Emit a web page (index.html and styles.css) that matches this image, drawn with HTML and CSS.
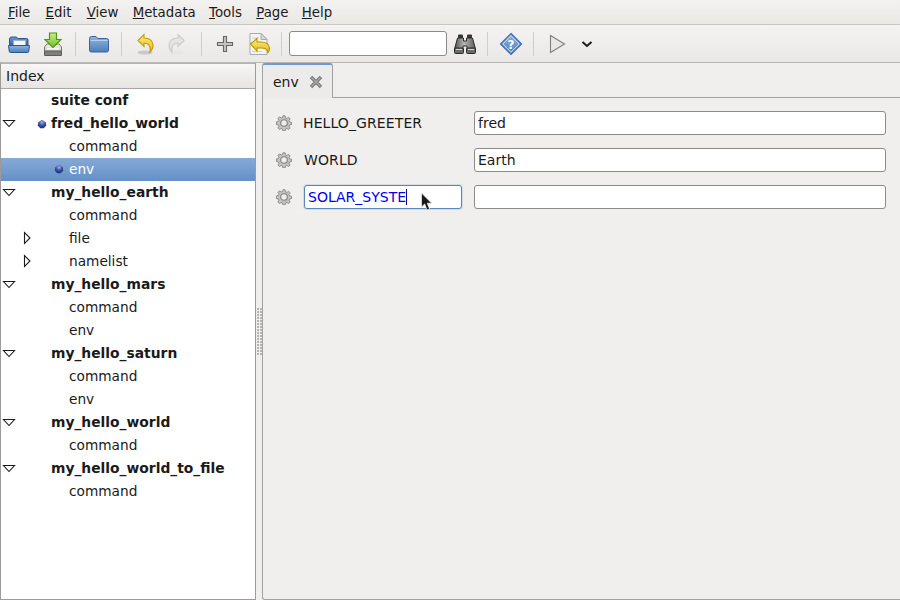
FILE: index.html
```html
<!DOCTYPE html>
<html lang="en">
<head>
<meta charset="utf-8">
<title>Index</title>
<link rel="stylesheet" href="styles.css">
</head>
<body>
<svg class="defs" width="0" height="0" aria-hidden="true">
  <defs>
    <linearGradient id="g-blue" x1="0" y1="0" x2="0" y2="1"><stop offset="0" stop-color="#8fb4de"/><stop offset="1" stop-color="#4d7fba"/></linearGradient>
    <linearGradient id="g-blue2" x1="0" y1="0" x2="0" y2="1"><stop offset="0" stop-color="#6c9bd2"/><stop offset="1" stop-color="#2f6099"/></linearGradient>
    <linearGradient id="g-gold" x1="0" y1="0" x2="0" y2="1"><stop offset="0" stop-color="#fbeb8a"/><stop offset="1" stop-color="#e8bd12"/></linearGradient>
    <linearGradient id="g-green" x1="0" y1="0" x2="0" y2="1"><stop offset="0" stop-color="#c4ee8c"/><stop offset="1" stop-color="#72c12a"/></linearGradient>
    <linearGradient id="g-metal" x1="0" y1="0" x2="0" y2="1"><stop offset="0" stop-color="#f2f2f0"/><stop offset="1" stop-color="#b9b9b6"/></linearGradient>
    <linearGradient id="g-bino" x1="0" y1="0" x2="1" y2="0"><stop offset="0" stop-color="#4e504d"/><stop offset=".45" stop-color="#b5b7b3"/><stop offset="1" stop-color="#5a5c59"/></linearGradient>
    <radialGradient id="g-dot" cx=".5" cy=".3" r=".7"><stop offset="0" stop-color="#a9b8e6"/><stop offset=".5" stop-color="#3a52a8"/><stop offset="1" stop-color="#1f3278"/></radialGradient>
    <symbol id="arrow-open" viewBox="0 0 14 10"><path d="M1.500 1.500h11L7 7.500z" fill="#fff" stroke="#1c1c1c" stroke-width="1.100"/></symbol>
    <symbol id="arrow-closed" viewBox="0 0 10 14"><path d="M2.500 1.500v11L8 7z" fill="#fff" stroke="#1c1c1c" stroke-width="1.100"/></symbol>
    <symbol id="dot" viewBox="0 0 10 10"><path d="M5 .8 8.800 3.200 9.200 6.500 6.800 9.300H3.200L.8 6.500 1.200 3.200z" fill="url(#g-dot)"/></symbol>
    <symbol id="gear" viewBox="0 0 16 16"><path d="M6.900.8h2.200l.4 2 1.300.6 1.800-1.100 1.500 1.500-1.100 1.800.6 1.300 2 .4v2.200l-2 .4-.6 1.300 1.100 1.800-1.500 1.500-1.800-1.100-1.300.6-.4 2H6.900l-.4-2-1.300-.6-1.800 1.100-1.500-1.500 1.100-1.800-.6-1.300-2-.4V6.900l2-.4.6-1.300-1.100-1.800 1.500-1.500 1.800 1.100 1.300-.6z" fill="#c4c3c0" stroke="#858583" stroke-width=".9"/><circle cx="8" cy="8" r="3.300" fill="#efeeec" stroke="#7e7e7c" stroke-width="1.100"/></symbol>
  </defs>
</svg>

<nav class="menubar">
  <span class="menu menu-wide"><u>F</u>ile</span>
  <span class="menu menu-wide"><u>E</u>dit</span>
  <span class="menu"><u>V</u>iew</span>
  <span class="menu menu-narrow"><u>M</u>etadata</span>
  <span class="menu"><u>T</u>ools</span>
  <span class="menu menu-narrow"><u>P</u>age</span>
  <span class="menu"><u>H</u>elp</span>
</nav>

<div class="toolbar">
  <span class="tool">
    <svg width="24" height="24" viewBox="0 0 24 24"><path d="M2.500 7q0-2 2-2h5l1.500 1.500h8.500q1.500 0 1.500 1.500v6H2.500z" fill="url(#g-blue2)" stroke="#2a5488"/><rect x="6.500" y="8.500" width="12" height="5" fill="#f6f6f4" stroke="#9fb0c8" stroke-width=".8"/><path d="M1.500 13.500h21l-.8 6q-.1 1-1.200 1H3.500q-1.100 0-1.200-1z" fill="url(#g-blue)" stroke="#2a5488"/></svg>
  </span>
  <span class="tool">
    <svg width="24" height="26" viewBox="0 0 24 26"><path d="M3.500 16 6 13h12l2.500 3v8H3.500z" fill="url(#g-metal)" stroke="#777775"/><rect x="3.500" y="20" width="17" height="4.500" rx=".5" fill="#7e7e7c" stroke="#5c5c5a"/><rect x="6" y="17" width="12" height="1.500" fill="#fafaf8"/><path d="M8.500 2h7v6.500h4.500L12 16.500 4 8.500h4.500z" fill="url(#g-green)" stroke="#4e9a06" stroke-width="1.200"/></svg>
  </span>
  <span class="sep"></span>
  <span class="tool">
    <svg width="24" height="24" viewBox="0 0 24 24"><path d="M2.500 6.500q0-2 2-2h4.500l2 2h8.500q2 0 2 2v10q0 1.500-2 1.500h-15q-2 0-2-1.500z" fill="url(#g-blue)" stroke="#3a659c"/><path d="M3.500 8h17v1h-17z" fill="#b9d2ec"/></svg>
  </span>
  <span class="sep"></span>
  <span class="tool tool-tight">
    <svg width="24" height="26" viewBox="0 0 24 26"><ellipse cx="12" cy="21.500" rx="7.500" ry="2" fill="#c9c9c6"/><path d="M5 9.500 11 3.500v3.500q8 0 9 6.500.4 4-3 7.500 1-4-.8-6.500-1.500-2.500-5.200-2.500v3.500z" fill="url(#g-gold)" stroke="#c49c00" stroke-width="1.100"/></svg>
  </span>
  <span class="tool tool-wide">
    <svg width="24" height="26" viewBox="0 0 24 26"><ellipse cx="12" cy="21.500" rx="7.500" ry="2" fill="#e6e6e3"/><path d="M19 9.500 13 3.500v3.500q-8 0-9 6.500-.4 4 3 7.500-1-4 .8-6.500 1.500-2.500 5.200-2.500v3.500z" fill="#e4e4e1" stroke="#cbcbc8" stroke-width="1.100"/></svg>
  </span>
  <span class="sep"></span>
  <span class="tool">
    <svg width="24" height="24" viewBox="0 0 24 24"><path d="M10.500 4.500h3v6h6v3h-6v6h-3v-6h-6v-3h6z" fill="#c4c4c1" stroke="#666664" stroke-width="1.100"/></svg>
  </span>
  <span class="tool">
    <svg width="24" height="26" viewBox="0 0 24 26"><path d="M3 2.500h11l6 6v15H3z" fill="#f4f4f1" stroke="#a9a9a6"/><path d="M14 2.500v6h6z" fill="#d9d9d6" stroke="#a9a9a6"/><path d="M5 7h7M5 20.500h10" stroke="#cfcfcc"/><path d="M3.500 13 10 7.500v3.500h4q8 0 8.500 6.500 0 2.500-1.500 4-.5-4.500-7-4.500H10v3z" fill="url(#g-gold)" stroke="#b89400" stroke-width="1.100"/></svg>
  </span>
  <span class="sep sep-search"></span>
  <input class="search" type="text" aria-label="Search">
  <span class="tool">
    <svg width="24" height="22" viewBox="0 0 24 22"><rect x="5" y="1.500" width="5" height="4" rx="1" fill="#333532"/><rect x="14" y="1.500" width="5" height="4" rx="1" fill="#333532"/><path d="M4.500 5h6v3h3V5h6l3 11H14v-3h-4v3H1.500z" fill="url(#g-bino)" stroke="#2c2c2a"/><rect x="1.500" y="15" width="9" height="5.500" rx="1" fill="#6a6c69" stroke="#2c2c2a"/><rect x="13.500" y="15" width="9" height="5.500" rx="1" fill="#6a6c69" stroke="#2c2c2a"/><path d="M3 16.500h6M15 16.500h6" stroke="#d4d6d1" stroke-width="1.200"/></svg>
  </span>
  <span class="sep"></span>
  <span class="tool">
    <svg width="24" height="24" viewBox="0 0 24 24"><path d="M12 1.500 22.500 12 12 22.500 1.500 12z" fill="url(#g-blue)" stroke="#3a6cae" stroke-width="1.200"/><path d="M12 3.800 20.200 12 12 20.200 3.800 12z" fill="none" stroke="#cfe0f3"/><text class="help-mark" x="12" y="16.500" text-anchor="middle">?</text></svg>
  </span>
  <span class="sep"></span>
  <span class="tool tool-run">
    <svg width="24" height="24" viewBox="0 0 24 24"><path d="M5.500 3.500v17l14-8.500z" fill="#e7e7e4" stroke="#7f7f7d" stroke-width="1.100"/></svg>
  </span>
  <span class="tool">
    <svg width="24" height="24" viewBox="0 0 24 24"><path d="m7.500 10 4.500 4 4.500-4" fill="none" stroke="#1c1c1c" stroke-width="2"/></svg>
  </span>
</div>

<main class="panes">
  <section class="tree">
    <div class="tree-head">Index</div>
    <div class="row bold"><span class="twist"></span><span class="mark"></span><span class="label">suite conf</span></div>
    <div class="row bold"><span class="twist"><svg width="14" height="10"><use href="#arrow-open"/></svg></span><span class="mark"><svg width="10" height="10"><use href="#dot"/></svg></span><span class="label">fred_hello_world</span></div>
    <div class="row child"><span class="label">command</span></div>
    <div class="row child selected"><span class="mark-child"><svg width="10" height="10"><use href="#dot"/></svg></span><span class="label">env</span></div>
    <div class="row bold"><span class="twist"><svg width="14" height="10"><use href="#arrow-open"/></svg></span><span class="mark"></span><span class="label">my_hello_earth</span></div>
    <div class="row child"><span class="label">command</span></div>
    <div class="row child"><span class="twist-child"><svg width="10" height="14"><use href="#arrow-closed"/></svg></span><span class="label">file</span></div>
    <div class="row child"><span class="twist-child"><svg width="10" height="14"><use href="#arrow-closed"/></svg></span><span class="label">namelist</span></div>
    <div class="row bold"><span class="twist"><svg width="14" height="10"><use href="#arrow-open"/></svg></span><span class="mark"></span><span class="label">my_hello_mars</span></div>
    <div class="row child"><span class="label">command</span></div>
    <div class="row child"><span class="label">env</span></div>
    <div class="row bold"><span class="twist"><svg width="14" height="10"><use href="#arrow-open"/></svg></span><span class="mark"></span><span class="label">my_hello_saturn</span></div>
    <div class="row child"><span class="label">command</span></div>
    <div class="row child"><span class="label">env</span></div>
    <div class="row bold"><span class="twist"><svg width="14" height="10"><use href="#arrow-open"/></svg></span><span class="mark"></span><span class="label">my_hello_world</span></div>
    <div class="row child"><span class="label">command</span></div>
    <div class="row bold"><span class="twist"><svg width="14" height="10"><use href="#arrow-open"/></svg></span><span class="mark"></span><span class="label">my_hello_world_to_file</span></div>
    <div class="row child"><span class="label">command</span></div>
  </section>

  <div class="grip"><span class="grip-dots"></span></div>

  <section class="notebook">
    <div class="tabs">
      <div class="tab">
        <span>env</span>
        <svg class="tab-close" width="14" height="14" viewBox="0 0 14 14"><path d="M2 2l10 10M12 2 2 12" stroke="#767674" stroke-width="3.400"/><path d="M2.500 2.500l9 9M11.500 2.500l-9 9" stroke="#a9a9a7" stroke-width="1.400"/></svg>
      </div>
    </div>
    <div class="page">
      <div class="var">
        <svg class="gear" width="16" height="16"><use href="#gear"/></svg>
        <span class="key">HELLO_GREETER</span>
        <span class="field">fred</span>
      </div>
      <div class="var">
        <svg class="gear" width="16" height="16"><use href="#gear"/></svg>
        <span class="key key-b">WORLD</span>
        <span class="field">Earth</span>
      </div>
      <div class="var">
        <svg class="gear" width="16" height="16"><use href="#gear"/></svg>
        <span class="key-edit"><span class="key-text">SOLAR_SYSTE</span></span>
        <span class="field"></span>
      </div>
    </div>
  </section>
</main>

<svg class="pointer" width="14" height="20" viewBox="0 0 14 20"><path d="M1.500 1v14l3.200-3 2.300 6 2.600-1-2.300-5.800h4.400z" fill="#1a1a1a" stroke="#e8e8e8" stroke-width=".8"/></svg>
</body>
</html>
```
FILE: styles.css
```css
* { box-sizing: border-box; }
html, body { margin: 0; padding: 0; }
body {
  width: 900px;
  height: 600px;
  overflow: hidden;
  display: flex;
  flex-direction: column;
  background: #f0efed;
  color: #1a1a1a;
  font-family: "DejaVu Sans", sans-serif;
  font-size: 14px;
  position: relative;
}
.defs { position: absolute; }
.menubar {
  height: 25px;
  flex: none;
  display: flex;
  align-items: center;
  gap: 14.3px;
  padding: 0 0 0 8px;
  font-size: 13.33px;
  background: linear-gradient(#f3f2f0, #e9e8e5);
  border-bottom: 1px solid #c8c7c4;
}
.menu-wide { margin-right: 1px; }
.menu-narrow { margin-right: -1px; }
.toolbar {
  height: 38px;
  flex: none;
  display: flex;
  align-items: center;
  padding: 0 0 0 7px;
  background: linear-gradient(#f4f3f1, #e9e8e6);
  border-bottom: 1px solid #b9b8b5;
}
.tool { width: 24px; height: 26px; display: flex; align-items: center; justify-content: center; margin-right: 10px; flex: none; }
.tool-tight { margin-right: 8px; }
.tool-wide { margin-right: 12px; }
.tool-run { margin-right: 6px; }
.sep { width: 1px; height: 24px; background: #cfcecb; margin-right: 11px; flex: none; }
.sep-search { margin-right: 7px; }
.search {
  width: 158px;
  height: 25px;
  margin: 0 6px 0 0;
  border: 1px solid #8c8b88;
  border-radius: 3px;
  background: #fff;
  flex: none;
}
.help-mark { font: bold 12px "DejaVu Sans", sans-serif; fill: #fff; }
.panes { flex: 1; display: flex; min-height: 0; }
.tree {
  width: 256px;
  flex: none;
  background: #fff;
  border: 1px solid #9c9b98;
  border-top-color: #b5b4b1;
}
.tree-head {
  height: 25px;
  display: flex;
  align-items: center;
  padding: 0 0 0 5px;
  background: linear-gradient(#f7f6f5, #e6e5e2);
  border-bottom: 1px solid #a8a7a4;
}
.row { height: 23px; display: flex; align-items: center; position: relative; font-size: 13.7px; }
.label { margin-bottom: 2px; }
.bold { font-weight: bold; font-size: 13.85px; }
.twist { width: 35px; padding-left: 1px; display: flex; align-items: center; flex: none; }
.mark { width: 15px; display: flex; align-items: center; flex: none; }
.mark svg { margin-left: 1px; }
.child { padding-left: 68px; }
.mark-child { position: absolute; left: 53px; top: 6px; display: flex; }
.twist-child { position: absolute; left: 21px; top: 4px; display: flex; }
.selected { background: linear-gradient(#86a9d6, #6490c7); color: #fff; }
.grip { width: 6px; flex: none; display: flex; align-items: center; padding-left: 1px; }
.grip-dots {
  width: 5px;
  height: 48px;
  background-image: radial-gradient(circle at 1px 1px, #b5b4b1 1px, transparent 1px);
  background-size: 3px 3px;
}
.notebook { flex: 1; display: flex; flex-direction: column; min-width: 0; }
.tabs { height: 34px; flex: none; display: flex; }
.tab {
  width: 71px;
  height: 35px;
  display: flex;
  align-items: center;
  gap: 10px;
  padding: 1px 0 0 10px;
  background: #ecebe9;
  border: 1px solid #a3a29f;
  border-top: 2px solid #6f9bd0;
  border-bottom: none;
  border-radius: 3px 3px 0 0;
  position: relative;
  z-index: 1;
}
.page {
  flex: 1;
  padding: 13px 14px 0 13px;
  display: flex;
  flex-direction: column;
  gap: 13px;
  border: 1px solid #a3a29f;
  border-right: none;
  border-radius: 0 0 0 3px;
}
.var { display: flex; align-items: center; height: 24px; }
.gear { flex: none; margin-right: 11px; }
.key { width: 171px; flex: none; letter-spacing: .1px; }
.key-b { padding-left: 1px; }
.key-edit {
  width: 158px;
  height: 24px;
  margin-left: 1px;
  margin-right: 12px;
  flex: none;
  display: flex;
  align-items: center;
  padding: 0 0 0 3px;
  background: #fff;
  color: #0000ee;
  border: 1px solid #5a86bb;
  border-radius: 3px;
  box-shadow: 0 0 0 1px rgba(120, 160, 210, .25);
}
.key-text { border-right: 1px solid #0000a0; line-height: 16px; }
.field {
  flex: 1;
  height: 24px;
  display: flex;
  align-items: center;
  padding: 0 0 0 3px;
  background: #fff;
  border: 1px solid #8c8b88;
  border-radius: 3px;
}
.pointer { position: absolute; left: 420px; top: 192px; }
```
